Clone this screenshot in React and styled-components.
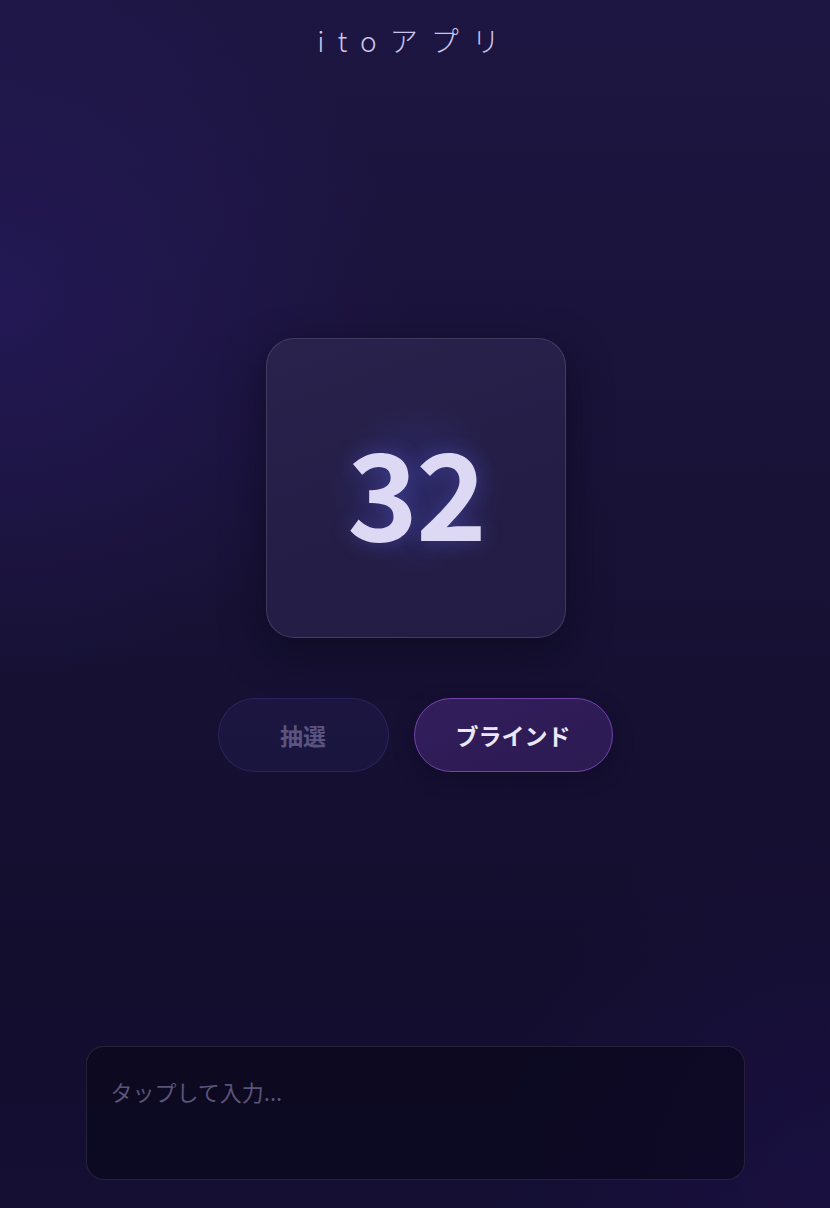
import React, { useState } from "react";
import styled, { createGlobalStyle } from "styled-components";

const GlobalStyle = createGlobalStyle`
  * { box-sizing: border-box; }
  html, body { margin: 0; padding: 0; }
  body {
    background: #151030;
    font-family: "Noto Sans CJK JP", "Noto Sans", sans-serif;
  }
`;

function App() {
  const [text, setText] = useState("");
  const [mode, setMode] = useState("blind");

  return (
    <Page>
      <GlobalStyle />
      <Title>itoアプリ</Title>
      <Main>
        <Card>
          <CardNumber>32</CardNumber>
        </Card>
        <ButtonRow>
          <PillButton $active={mode === "draw"} onClick={() => setMode("draw")}>
            抽選
          </PillButton>
          <PillButton $active={mode === "blind"} onClick={() => setMode("blind")}>
            ブラインド
          </PillButton>
        </ButtonRow>
      </Main>
      <InputBox
        value={text}
        onChange={(e) => setText(e.target.value)}
        placeholder="タップして入力..."
      />
    </Page>
  );
}

export default App;

const Page = styled.div`
  min-height: 100vh;
  display: flex;
  flex-direction: column;
  align-items: center;
  padding: 20px 0 28px;
  background:
    radial-gradient(ellipse 70% 45% at 0% 25%, rgba(42, 28, 104, 0.55), transparent 70%),
    radial-gradient(ellipse 60% 50% at 100% 100%, rgba(28, 16, 72, 0.6), transparent 70%),
    linear-gradient(180deg, #1d1642 0%, #181236 45%, #130e2e 80%, #140f33 100%);
`;

const Title = styled.h1`
  margin: 0 0 3px;
  font-size: 28px;
  font-weight: 300;
  line-height: 40px;
  letter-spacing: 13px;
  color: #cbc4ea;
`;

const Main = styled.main`
  flex: 1;
  display: flex;
  flex-direction: column;
  align-items: center;
  justify-content: center;
  gap: 60px;
  width: 100%;
`;

const Card = styled.div`
  width: 300px;
  height: 300px;
  margin-left: 2px;
  border-radius: 28px;
  display: flex;
  align-items: center;
  justify-content: center;
  background:
    radial-gradient(circle at 50% 50%, rgba(48, 48, 120, 0.65), transparent 40%),
    linear-gradient(160deg, #29224c 0%, #241e47 60%, #231d46 100%);
  border: 1px solid rgba(255, 255, 255, 0.13);
  box-shadow: 0 14px 40px rgba(8, 5, 22, 0.55);
`;

const CardNumber = styled.span`
  font-size: 120px;
  font-weight: 700;
  line-height: 1;
  color: #ddd8f4;
  letter-spacing: -2px;
  margin-top: 2px;
  text-shadow: 0 0 20px rgba(100, 100, 230, 0.35);
`;

const ButtonRow = styled.div`
  display: flex;
  gap: 25px;
`;

const PillButton = styled.button`
  height: 74px;
  min-width: 171px;
  padding: 0 41px;
  border-radius: 37px;
  font-family: inherit;
  font-size: 23px;
  font-weight: 700;
  cursor: pointer;
  border: 1px solid ${(p) => (p.$active ? "#7443a8" : "rgba(70, 60, 150, 0.35)")};
  background: ${(p) =>
    p.$active
      ? "linear-gradient(160deg, #331e5c, #2b1a52)"
      : "rgba(34, 28, 80, 0.45)"};
  color: ${(p) => (p.$active ? "#ebe7f7" : "#5b5480")};
  box-shadow: ${(p) => (p.$active ? "0 6px 20px rgba(10, 5, 30, 0.4)" : "none")};
`;

const InputBox = styled.textarea`
  width: 659px;
  height: 134px;
  resize: none;
  padding: 30px 24px;
  border-radius: 18px;
  border: 1px solid rgba(255, 255, 255, 0.1);
  background: rgba(8, 6, 22, 0.55);
  color: #ddd8f4;
  font-family: inherit;
  font-size: 22px;
  line-height: 28px;
  outline: none;
  &::placeholder {
    color: #5a5478;
  }
`;
